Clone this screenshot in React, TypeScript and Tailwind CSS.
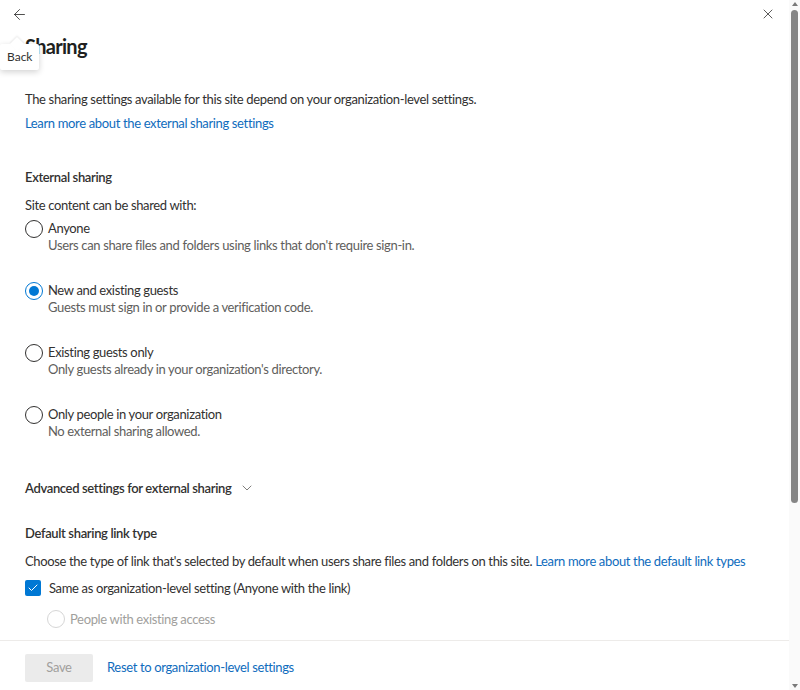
import React, { useState } from 'react';
import { ArrowLeft, X, ChevronDown, Check } from 'lucide-react';

type Option = { id: string; label: string; desc: string };

const options: Option[] = [
  { id: 'anyone', label: 'Anyone', desc: "Users can share files and folders using links that don't require sign-in." },
  { id: 'guests', label: 'New and existing guests', desc: 'Guests must sign in or provide a verification code.' },
  { id: 'existing', label: 'Existing guests only', desc: "Only guests already in your organization's directory." },
  { id: 'org', label: 'Only people in your organization', desc: 'No external sharing allowed.' },
];

const Radio: React.FC<{ checked: boolean; disabled?: boolean }> = ({ checked, disabled }) => (
  <span
    className={`flex h-[18px] w-[18px] shrink-0 items-center justify-center rounded-full border ${
      disabled ? 'border-[#d6d6d6]' : checked ? 'border-[#0078d4]' : 'border-[#323130]'
    }`}
  >
    {checked && <span className="h-[10px] w-[10px] rounded-full bg-[#0078d4]" />}
  </span>
);

export default function App() {
  const [selected, setSelected] = useState('guests');
  const [sameAsOrg, setSameAsOrg] = useState(true);

  return (
    <div
      className="relative flex h-[690px] w-[800px] flex-col overflow-hidden bg-white text-[13px] tracking-[-0.35px] text-[#323130]"
      style={{ fontFamily: 'Lato, "Open Sans", sans-serif' }}
    >
      <div className="flex items-center justify-between pl-[10px] pr-[24px] pt-[5px]">
        <button className="flex h-[18px] w-[18px] items-center justify-center text-[#323130]">
          <ArrowLeft className="h-[17px] w-[17px]" strokeWidth={1.2} />
        </button>
        <button className="text-[#323130]">
          <X className="h-[16px] w-[16px]" strokeWidth={1.2} />
        </button>
      </div>

      <div className="flex-1 overflow-hidden pl-[25px] pr-[24px]">
        <h1 className="mt-[10px] text-[20px] font-bold leading-[26px] tracking-[-0.7px] text-[#201f1e]">Sharing</h1>

        <p className="mt-[31px] leading-[18px]">
          The sharing settings available for this site depend on your organization-level settings.
        </p>
        <a className="mt-[6px] block leading-[18px] text-[#0f6cbd]">Learn more about the external sharing settings</a>

        <h2 className="mt-[36px] font-semibold leading-[18px]">External sharing</h2>
        <p className="mt-[10px] leading-[18px]">Site content can be shared with:</p>

        <div className="mt-[5px] flex flex-col gap-[28px]">
          {options.map((o) => (
            <label key={o.id} className="flex cursor-pointer items-start gap-[5px]" onClick={() => setSelected(o.id)}>
              <span className="mt-[1px]">
                <Radio checked={selected === o.id} />
              </span>
              <span className="flex flex-col">
                <span className="leading-[18px]">{o.label}</span>
                <span className="leading-[16px] text-[#605e5c]">{o.desc}</span>
              </span>
            </label>
          ))}
        </div>

        <button className="mt-[40px] flex items-center gap-[8px] font-semibold leading-[18px]">
          Advanced settings for external sharing
          <ChevronDown className="h-[16px] w-[16px] text-[#605e5c]" strokeWidth={1.2} />
        </button>

        <h2 className="mt-[27px] font-semibold leading-[18px]">Default sharing link type</h2>
        <p className="mt-[10px] whitespace-nowrap leading-[18px]">
          Choose the type of link that's selected by default when users share files and folders on this site.{' '}
          <a className="text-[#0f6cbd]">Learn more about the default link types</a>
        </p>

        <label className="mt-[9px] flex cursor-pointer items-center gap-[8px]" onClick={() => setSameAsOrg(!sameAsOrg)}>
          <span
            className={`flex h-[16px] w-[16px] items-center justify-center rounded-[2px] ${
              sameAsOrg ? 'bg-[#0078d4]' : 'border border-[#323130]'
            }`}
          >
            {sameAsOrg && <Check className="h-[12px] w-[12px] text-white" strokeWidth={2} />}
          </span>
          <span className="leading-[18px]">Same as organization-level setting (Anyone with the link)</span>
        </label>

        <div className="ml-[22px] mt-[13px] flex items-center gap-[5px] text-[#a19f9d]">
          <Radio checked={false} disabled />
          <span className="leading-[18px]">People with existing access</span>
        </div>
      </div>

      <div className="mr-[11px] flex h-[50px] shrink-0 items-center gap-[14px] border-t border-[#edebe9] pl-[25px] pt-[4px]">
        <button className="h-[28px] w-[68px] rounded-[2px] bg-[#ebebeb] text-[#a19f9d]">Save</button>
        <a className="text-[#0f6cbd]">Reset to organization-level settings</a>
      </div>

      {/* scrollbar */}
      <div className="absolute right-0 top-0 flex h-full w-[11px] flex-col items-center bg-[#fafafa]">
        <span className="mt-[2px] h-0 w-0 border-x-[3px] border-b-[4px] border-x-transparent border-b-[#7a7a7a]" />
        <span className="mt-[4px] h-[493px] w-[7px] rounded-full bg-[#858585]" />
        <span className="mb-[2px] mt-auto h-0 w-0 border-x-[3px] border-t-[4px] border-x-transparent border-t-[#7a7a7a]" />
      </div>

      {/* Back tooltip */}
      <div className="absolute left-0 top-[44px] rounded-[2px] bg-white px-[7px] py-[5px] text-[12px] leading-[16px] tracking-normal text-[#323130] shadow-[0_2px_6px_rgba(0,0,0,0.18)]">
        <span className="absolute -top-[5px] left-[12px] h-[10px] w-[10px] rotate-45 bg-white shadow-[-1px_-1px_2px_rgba(0,0,0,0.08)]" />
        <span className="relative">Back</span>
      </div>
    </div>
  );
}
